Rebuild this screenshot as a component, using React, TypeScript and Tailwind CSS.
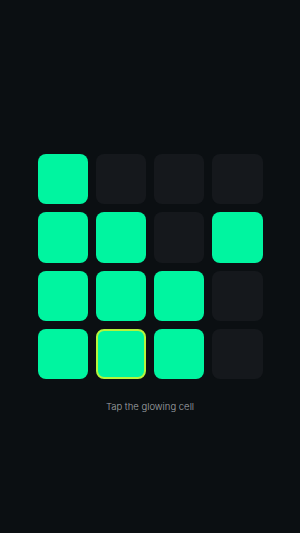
import { useState } from "react";

const initial = [
  1, 0, 0, 0,
  1, 1, 0, 1,
  1, 1, 1, 0,
  1, 1, 1, 0,
];

export default function App() {
  const [cells, setCells] = useState<number[]>(initial);
  const glowing = 13;

  return (
    <div
      className="min-h-[533px] w-full bg-[#0b0f12] flex flex-col items-center pt-[154px]"
      style={{ fontFamily: "Inter, 'Noto Sans', sans-serif" }}
    >
      <div className="grid w-[225px] grid-cols-4 gap-2">
        {cells.map((on, i) => (
          <button
            key={i}
            onClick={() => setCells(cells.map((c, j) => (j === i ? 1 - c : c)))}
            className={`aspect-square rounded-lg ${
              on ? "bg-[#00f5a0]" : "bg-[#15181c]"
            } ${i === glowing ? "border-2 border-[#b4f53c]" : ""}`}
          />
        ))}
      </div>
      <p className="mt-[21px] text-[9.5px] font-light text-[#a3a7ab]">Tap the glowing cell</p>
    </div>
  );
}
